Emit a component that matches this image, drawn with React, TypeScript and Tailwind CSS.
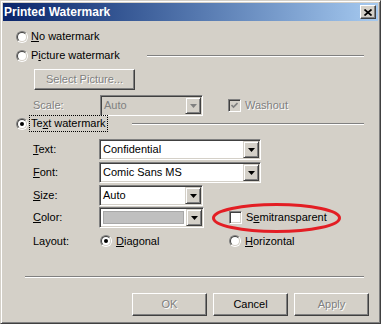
import React from "react";

const sunken =
  "border border-t-[#808080] border-l-[#808080] border-r-white border-b-white shadow-[inset_1px_1px_0_#404040,inset_-1px_-1px_0_#d4d0c8] p-[1px]";
const emboss = "text-[#808080] [text-shadow:1px_1px_0_#ffffff]";

function Radio({ checked }: { checked?: boolean }) {
  return (
    <div className="w-[12px] h-[12px] shrink-0 rounded-full border border-t-[#808080] border-l-[#808080] border-r-white border-b-white">
      <div className="w-full h-full rounded-full border border-t-[#404040] border-l-[#404040] border-r-[#d4d0c8] border-b-[#d4d0c8] bg-white flex items-center justify-center">
        {checked && <div className="w-[4px] h-[4px] rounded-full bg-black" />}
      </div>
    </div>
  );
}

function Check({ disabled, checked }: { disabled?: boolean; checked?: boolean }) {
  return (
    <div
      className={`w-[13px] h-[13px] shrink-0 ${sunken} ${disabled ? "bg-[#d4d0c8]" : "bg-white"} flex items-center justify-center`}
    >
      {checked && (
        <svg width="7" height="7" viewBox="0 0 7 7">
          <path d="M0.5 3 L2.5 5 L6.5 1" fill="none" stroke={disabled ? "#808080" : "#000"} strokeWidth="1.6" />
        </svg>
      )}
    </div>
  );
}

function DropBtn({ disabled }: { disabled?: boolean }) {
  return (
    <div className="w-[16px] h-full shrink-0 bg-[#d4d0c8] border border-t-[#d4d0c8] border-l-[#d4d0c8] border-r-[#404040] border-b-[#404040] shadow-[inset_1px_1px_0_#fff,inset_-1px_-1px_0_#808080] flex items-center justify-center">
      <svg width="7" height="4" viewBox="0 0 7 4" className="mt-[1px]">
        <path d="M0 0 H7 L3.5 4 Z" fill={disabled ? "#808080" : "#000"} />
      </svg>
    </div>
  );
}

function Combo({
  width,
  text,
  disabled,
  swatch,
}: {
  width: string;
  text?: string;
  disabled?: boolean;
  swatch?: boolean;
}) {
  return (
    <div className={`${width} h-[21px] ${sunken} flex ${disabled ? "bg-[#d4d0c8]" : "bg-white"}`}>
      <div className="flex-1 flex items-center min-w-0">
        {swatch ? (
          <div className="ml-[2px] mr-[2px] h-[13px] flex-1 bg-[#c0c0c0] border border-[#a8a8a8]" />
        ) : (
          <span className={`pl-[2px] ${disabled ? "text-[#808080]" : "text-black"}`}>{text}</span>
        )}
      </div>
      <DropBtn disabled={disabled} />
    </div>
  );
}

function Btn({ label, disabled }: { label: string; disabled?: boolean }) {
  return (
    <div className="w-[75px] h-[23px] bg-[#d4d0c8] border border-t-white border-l-white border-r-[#404040] border-b-[#404040] shadow-[inset_-1px_-1px_0_#808080] flex items-center justify-center">
      <span className={disabled ? emboss : "text-black"}>{label}</span>
    </div>
  );
}

function Line({ className }: { className: string }) {
  return <div className={`h-[2px] border-t border-t-[#808080] border-b border-b-white ${className}`} />;
}

export default function App() {
  return (
    <div className="w-[381px] h-[324px] relative bg-[#d4d0c8] border border-t-[#d4d0c8] border-l-[#d4d0c8] border-r-[#404040] border-b-[#404040] shadow-[inset_1px_1px_0_#fff,inset_-1px_-1px_0_#808080] p-[2px] flex flex-col font-['Liberation_Sans',Arial,sans-serif] text-[11px] leading-none text-black select-none">
      {/* Title bar */}
      <div className="h-[18px] shrink-0 bg-gradient-to-r from-[#0a246a] to-[#a6caf0] flex items-center pl-[1px] pr-[2px]">
        <span className="text-white font-bold text-[12px] flex-1">Printed Watermark</span>
        <div className="w-[16px] h-[14px] bg-[#d4d0c8] border border-t-white border-l-white border-r-[#404040] border-b-[#404040] shadow-[inset_-1px_-1px_0_#808080] flex items-center justify-center">
          <svg width="8" height="7" viewBox="0 0 8 7">
            <path d="M0.5 0.5 L7.5 6.5 M7.5 0.5 L0.5 6.5" stroke="#000" strokeWidth="1.7" />
          </svg>
        </div>
      </div>

      {/* No watermark */}
      <div className="mt-[6px] h-[19px] flex items-center pl-[13px] gap-[3px]">
        <Radio />
        <span>
          <u>N</u>o watermark
        </span>
      </div>

      {/* Picture watermark */}
      <div className="h-[19px] flex items-center pl-[13px]">
        <div className="w-[131px] flex items-center gap-[3px]">
          <Radio />
          <span>
            P<u>i</u>cture watermark
          </span>
        </div>
        <Line className="flex-1 mr-[14px]" />
      </div>

      {/* Select Picture */}
      <div className="mt-[4px] ml-[31px] w-[101px] h-[21px] bg-[#d4d0c8] border border-t-white border-l-white border-r-[#404040] border-b-[#404040] shadow-[inset_-1px_-1px_0_#808080] flex items-center justify-center">
        <span className={emboss}>Select Picture...</span>
      </div>

      {/* Scale row */}
      <div className="mt-[5px] h-[21px] flex items-center pl-[30px]">
        <span className={`w-[67px] ${emboss}`}>Scale:</span>
        <Combo width="w-[103px]" text="Auto" disabled />
        <div className="ml-[25px] flex items-center gap-[4px]">
          <Check disabled checked />
          <span className={emboss}>Washout</span>
        </div>
      </div>

      {/* Text watermark */}
      <div className="mt-[-1px] h-[17px] flex items-center pl-[13px]">
        <div className="w-[116px] flex items-center">
          <Radio checked />
          <span className="ml-[1px] h-[17px] px-[1px] flex items-center border border-dotted border-black">
            Te<u>x</u>t watermark
          </span>
        </div>
        <Line className="flex-1 mr-[14px]" />
      </div>

      {/* Text */}
      <div className="mt-[7px] h-[21px] flex items-center pl-[30px]">
        <span className="w-[66px]">
          <u>T</u>ext:
        </span>
        <Combo width="w-[162px]" text="Confidential" />
      </div>

      {/* Font */}
      <div className="mt-[2px] h-[21px] flex items-center pl-[30px]">
        <span className="w-[66px]">
          <u>F</u>ont:
        </span>
        <Combo width="w-[162px]" text="Comic Sans MS" />
      </div>

      {/* Size */}
      <div className="mt-[2px] h-[21px] flex items-center pl-[30px]">
        <span className="w-[66px]">
          <u>S</u>ize:
        </span>
        <Combo width="w-[104px]" text="Auto" />
      </div>

      {/* Color */}
      <div className="mt-[1px] h-[21px] flex items-center pl-[30px]">
        <span className="w-[66px]">
          <u>C</u>olor:
        </span>
        <Combo width="w-[105px]" swatch />
        <div className="ml-[25px] flex items-center gap-[4px]">
          <Check />
          <span>
            S<u>e</u>mitransparent
          </span>
        </div>
      </div>

      {/* Layout */}
      <div className="mt-[6px] h-[14px] flex items-center pl-[30px]">
        <span className="w-[67px]">Layout:</span>
        <div className="w-[129px] flex items-center gap-[4px]">
          <Radio checked />
          <span>
            <u>D</u>iagonal
          </span>
        </div>
        <div className="flex items-center gap-[4px]">
          <Radio />
          <span>
            <u>H</u>orizontal
          </span>
        </div>
      </div>

      <Line className="mt-[28px] ml-[22px] mr-[14px]" />

      {/* Buttons */}
      <div className="mt-[15px] flex justify-end gap-[6px] pr-[9px]">
        <Btn label="OK" disabled />
        <Btn label="Cancel" />
        <Btn label="Apply" disabled />
      </div>

      {/* Red annotation ellipse */}
      <svg
        className="absolute left-[209px] top-[200px] pointer-events-none"
        width="134"
        height="34"
        viewBox="0 0 134 34"
      >
        <ellipse cx="66.5" cy="17" rx="63" ry="13.5" fill="none" stroke="#e31e24" strokeWidth="3" />
      </svg>
    </div>
  );
}
